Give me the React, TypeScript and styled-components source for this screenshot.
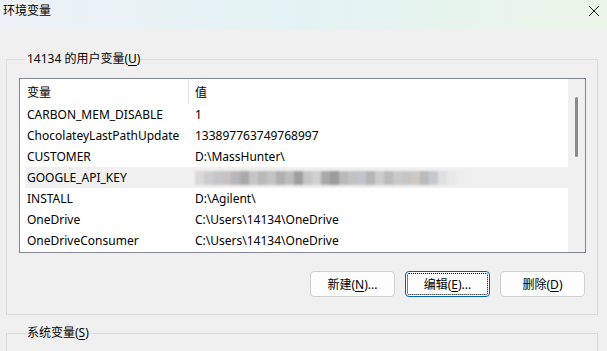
import React from "react";
import styled, { createGlobalStyle } from "styled-components";

const Global = createGlobalStyle`
  html, body { margin: 0; padding: 0; background: #f0f0f0; }
  body { font-family: "Noto Sans", "Noto Sans CJK SC", sans-serif; font-size: 12px; color: #000; }
  * { box-sizing: border-box; }
`;

const Window = styled.div`
  width: 607px;
  height: 351px;
  overflow: hidden;
  display: flex;
  flex-direction: column;
  background: #f0f0f0;
`;

const TitleBar = styled.div`
  height: 29px;
  flex: none;
  display: flex;
  align-items: center;
  justify-content: space-between;
  padding: 0 7px 7px 3px;
  background: linear-gradient(90deg, #edf1f7 0%, #e3f3f4 50%, #ebf5e7 100%);
`;

const Title = styled.span`
  font-size: 12px;
  line-height: 16px;
`;

const Body = styled.div`
  flex: 1;
  display: flex;
  flex-direction: column;
  gap: 10px;
  padding: 22px 9px 0 6px;
`;

const Group = styled.fieldset`
  margin: 0;
  padding: 11px 11px 17px 12px;
  border: 1px solid #dcdcdc;
  min-width: 0;
`;

const Legend = styled.legend`
  margin-left: 7px;
  padding: 0 1px;
  line-height: 16px;
  font-size: 12px;
`;

const U = styled.span`
  text-decoration: underline;
  text-underline-offset: 2px;
`;

const ListBox = styled.div`
  border: 1px solid #828790;
  background: #fff;
  display: flex;
  height: 175px;
`;

const ListMain = styled.div`
  flex: 1;
  display: flex;
  flex-direction: column;
  padding-left: 5px;
`;

const HeaderRow = styled.div`
  display: grid;
  grid-template-columns: 163px 1fr;
  height: 25px;
  align-items: center;
`;

const HeaderCell = styled.div<{ $sep?: boolean }>`
  height: 100%;
  display: flex;
  align-items: center;
  padding-left: ${(p) => (p.$sep ? "6px" : "2px")};
  border-left: ${(p) => (p.$sep ? "1px solid #e5e5e5" : "none")};
`;

const Row = styled.div<{ $hover?: boolean }>`
  display: grid;
  grid-template-columns: 168px 1fr;
  height: 21px;
  align-items: center;
  background: ${(p) => (p.$hover ? "#f0f0f0" : "transparent")};
`;

const Cell = styled.div`
  padding-left: 2px;
  white-space: nowrap;
  overflow: hidden;
`;

const Blur = styled.div`
  display: flex;
  align-items: center;
  height: 21px;
  padding-left: 2px;
  filter: blur(1px);
`;

const Block = styled.span`
  display: inline-block;
  width: 9px;
  height: 14px;
`;

const ScrollTrack = styled.div`
  width: 17px;
  flex: none;
  background: #f0f0f0;
  display: flex;
  justify-content: center;
  padding-top: 18px;
`;

const Thumb = styled.div`
  width: 3px;
  height: 60px;
  border-radius: 2px;
  background: #8a8a8a;
`;

const ButtonRow = styled.div`
  display: flex;
  justify-content: flex-end;
  gap: 10px;
  margin-top: 18px;
  padding-right: 1px;
`;

const Button = styled.button<{ $focus?: boolean }>`
  width: 85px;
  height: 26px;
  font-family: inherit;
  font-size: 12px;
  color: #000;
  background: #fdfdfd;
  border: 1px solid ${(p) => (p.$focus ? "#005fb8" : "#d0d0d0")};
  border-radius: 4px;
  padding: 0;
  outline: ${(p) => (p.$focus ? "1px dotted #000" : "none")};
  outline-offset: -3px;
`;

const SysGroup = styled(Group)`
  height: 60px;
`;

const blocks = [
  "#d9d9d9", "#cdcdd0", "#c6c6c9", "#c9c2c2", "#b8b5bc", "#a9a9a9", "#c6c6c6", "#b9b9b9",
  "#c3c3c3", "#b0b0b0", "#bdbdbd", "#9f9f9f", "#c7c7c7", "#d0d0d0", "#a9a9a9", "#9c9c9c",
  "#b9b9b9", "#c2c2c2", "#bfc5cb", "#b5b5b5", "#cccccc", "#bcbcbc", "#c9c9c9", "#c6c6c6",
  "#cfc8c3", "#bababa", "#c6c9cc", "#e0e0e0", "#e8e8e8", "#eeeeee",
];

const rows: [string, string][] = [
  ["CARBON_MEM_DISABLE", "1"],
  ["ChocolateyLastPathUpdate", "133897763749768997"],
  ["CUSTOMER", "D:\\MassHunter\\"],
  ["GOOGLE_API_KEY", ""],
  ["INSTALL", "D:\\Agilent\\"],
  ["OneDrive", "C:\\Users\\14134\\OneDrive"],
  ["OneDriveConsumer", "C:\\Users\\14134\\OneDrive"],
];

export default function App() {
  return (
    <Window>
      <Global />
      <TitleBar>
        <Title>环境变量</Title>
        <svg width="12" height="12" viewBox="0 0 12 12">
          <path d="M1 1 L11 11 M11 1 L1 11" stroke="#1a1a1a" strokeWidth="1" fill="none" />
        </svg>
      </TitleBar>
      <Body>
        <Group>
          <Legend>
            14134 的用户变量(<U>U</U>)
          </Legend>
          <ListBox>
            <ListMain>
              <HeaderRow>
                <HeaderCell>变量</HeaderCell>
                <HeaderCell $sep>值</HeaderCell>
              </HeaderRow>
              {rows.map(([k, v]) => (
                <Row key={k} $hover={k === "GOOGLE_API_KEY"}>
                  <Cell>{k}</Cell>
                  {k === "GOOGLE_API_KEY" ? (
                    <Blur>
                      {blocks.map((c, i) => (
                        <Block key={i} style={{ background: c }} />
                      ))}
                    </Blur>
                  ) : (
                    <Cell>{v}</Cell>
                  )}
                </Row>
              ))}
            </ListMain>
            <ScrollTrack>
              <Thumb />
            </ScrollTrack>
          </ListBox>
          <ButtonRow>
            <Button>
              新建(<U>N</U>)...
            </Button>
            <Button $focus>
              编辑(<U>E</U>)...
            </Button>
            <Button>
              删除(<U>D</U>)
            </Button>
          </ButtonRow>
        </Group>
        <SysGroup>
          <Legend>
            系统变量(<U>S</U>)
          </Legend>
        </SysGroup>
      </Body>
    </Window>
  );
}
